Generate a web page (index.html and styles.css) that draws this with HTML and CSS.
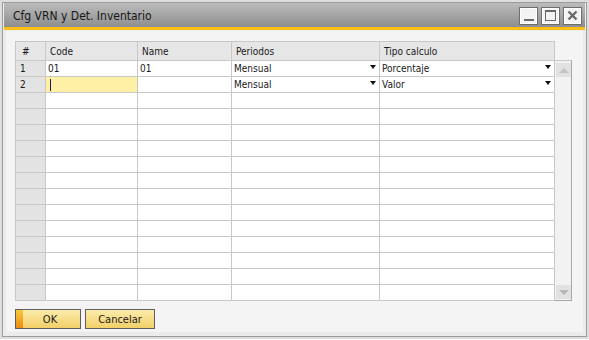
FILE: index.html
```html
<!DOCTYPE html>
<html>
	<head>
		<meta charset="utf-8">
		<title>Cfg VRN y Det. Inventario</title>
		<link rel="stylesheet" href="styles.css">
	</head>
	<body>
		<div class="window">
			<!-- barra de titulo -->
			<div class="titlebar">
				<span class="title">Cfg VRN y Det. Inventario</span>
				<div class="wbtns">
					<span class="wbtn"><i class="ico-min"></i></span>
					<span class="wbtn"><i class="ico-max"></i></span>
					<span class="wbtn">
						<svg width="11" height="11" viewBox="0 0 11 11"><path d="M1.5 1.5 L9.5 9.5 M9.5 1.5 L1.5 9.5" stroke="#6a6a6a" stroke-width="2.4"/></svg>
					</span>
				</div>
			</div>
			<div class="frame">
				<div class="panel">
					<div class="gridwrap">
						<div class="grid">
							<div class="hd">#</div>
							<div class="hd">Code</div>
							<div class="hd">Name</div>
							<div class="hd">Periodos</div>
							<div class="hd">Tipo calculo</div>

							<div class="num">1</div>
							<div class="cell">01</div>
							<div class="cell">01</div>
							<div class="cell combo">Mensual<i class="arrow"></i></div>
							<div class="cell combo">Porcentaje<i class="arrow"></i></div>

							<div class="num">2</div>
							<div class="cell active"><i class="caret"></i></div>
							<div class="cell"></div>
							<div class="cell combo">Mensual<i class="arrow"></i></div>
							<div class="cell combo">Valor<i class="arrow"></i></div>
						</div>
						<div class="scroll">
							<div class="sbtn"><i class="up"></i></div>
							<div class="sbtn"><i class="down"></i></div>
						</div>
					</div>
					<div class="buttons">
						<button class="btn ok">OK</button>
						<button class="btn">Cancelar</button>
					</div>
				</div>
			</div>
		</div>

		<script>
			// filas vacias de la matriz
			var grid = document.querySelector(".grid");
			for (var i = 0; i < 13; i++) {
				var html = '<div class="num"></div>';
				for (var j = 0; j < 4; j++) {
					html += '<div class="cell"></div>';
				}
				grid.insertAdjacentHTML("beforeend", html);
			}
		</script>
	</body>
</html>
```

FILE: styles.css
```css
* {
	margin: 0;
	padding: 0;
	box-sizing: border-box;
}
body {
	background: #fdfdfd;
	font-family: "DejaVu Sans Condensed", "DejaVu Sans", sans-serif;
	color: #1a1a1a;
}
.window {
	width: 585px;
	height: 335px;
	margin: 2px;
	border: 1px solid #9c9c9c;
	box-shadow: 0 0 0 2px #dedede;
	padding: 0 1px 1px 1px;
	background: #ececec;
	display: flex;
	flex-direction: column;
}
.titlebar {
	height: 27px;
	background: linear-gradient(#bcbcbc, #8e8e8e);
	border-bottom: 3px solid #fbbd1a;
	display: flex;
	align-items: center;
	padding-left: 9px;
	padding-right: 3px;
}
.title {
	font-size: 12px;
	color: #161616;
	margin-top: 1px;
}
.wbtns {
	margin-left: auto;
	display: flex;
	gap: 3px;
	margin-top: 1px;
}
.wbtn {
	width: 19px;
	height: 18px;
	border: 1px solid #6e6e6e;
	background: #f3f3f3;
	box-shadow: inset 0 0 0 1px #fff;
	display: flex;
	align-items: center;
	justify-content: center;
}
.ico-min {
	width: 10px;
	height: 2px;
	background: #6a6a6a;
	margin-top: 9px;
}
.ico-max {
	width: 11px;
	height: 11px;
	border: 1px solid #6a6a6a;
	border-top-width: 2px;
}
.frame {
	flex: 1;
	padding: 1px 2px 3px 2px;
	background: #ebebeb;
}
.panel {
	height: 100%;
	background: #f4f4f4;
	padding: 10px 0 0 9px;
}
.gridwrap {
	display: flex;
	align-items: flex-start;
}
.grid {
	display: grid;
	grid-template-columns: 30px 92px 94px 148px 175px;
	grid-template-rows: 19px;
	grid-auto-rows: 16px;
	border-left: 1px solid #c8c8c8;
	border-top: 1px solid #c8c8c8;
	font-size: 10px;
}
.grid > div {
	border-right: 1px solid #c8c8c8;
	border-bottom: 1px solid #c8c8c8;
	display: flex;
	align-items: center;
	white-space: nowrap;
}
.grid .hd {
	background: #e6e6e6;
	padding-left: 4px;
}
.grid .hd:first-child {
	padding-left: 6px;
}
.num {
	background: #e3e3e3;
	padding-left: 4px;
}
.cell {
	background: #fff;
	padding-left: 2px;
}
.cell.active {
	background: #fff0a6;
	padding-left: 4px;
}
.caret {
	width: 1px;
	height: 12px;
	background: #10205a;
}
.combo {
	padding-right: 3px;
}
.arrow {
	margin-left: auto;
	width: 0;
	height: 0;
	border-left: 3.5px solid transparent;
	border-right: 3.5px solid transparent;
	border-top: 4px solid #111;
	margin-top: -3px;
}
.scroll {
	width: 17px;
	height: 241px;
	margin-top: 19px;
	background: #f2f2f2;
	border-top: 1px solid #c8c8c8;
	border-right: 1px solid #a8a8a8;
	border-bottom: 1px solid #a8a8a8;
	display: flex;
	flex-direction: column;
	justify-content: space-between;
	padding: 2px 1px 1px 1px;
}
.sbtn {
	width: 15px;
	height: 14px;
	background: #e2e2e2;
	display: flex;
	align-items: center;
	justify-content: center;
}
.up, .down {
	width: 0;
	height: 0;
	border-left: 5px solid transparent;
	border-right: 5px solid transparent;
}
.up {
	border-bottom: 5px solid #c4c4c4;
}
.down {
	border-top: 5px solid #b8b8b8;
}
.buttons {
	display: flex;
	gap: 4px;
	margin-top: 8px;
}
.btn {
	height: 20px;
	border: 1px solid #5e5e5e;
	background: linear-gradient(#fcebac, #f3d069);
	font-family: "DejaVu Sans Condensed", "DejaVu Sans", sans-serif;
	font-size: 11px;
	color: #1a1a1a;
	width: 70px;
}
.btn.ok {
	width: 66px;
	background: linear-gradient(#f7c93c, #ea8c12) left / 7px 100% no-repeat, linear-gradient(#fcebac, #f3d069);
	padding-left: 4px;
}
```
